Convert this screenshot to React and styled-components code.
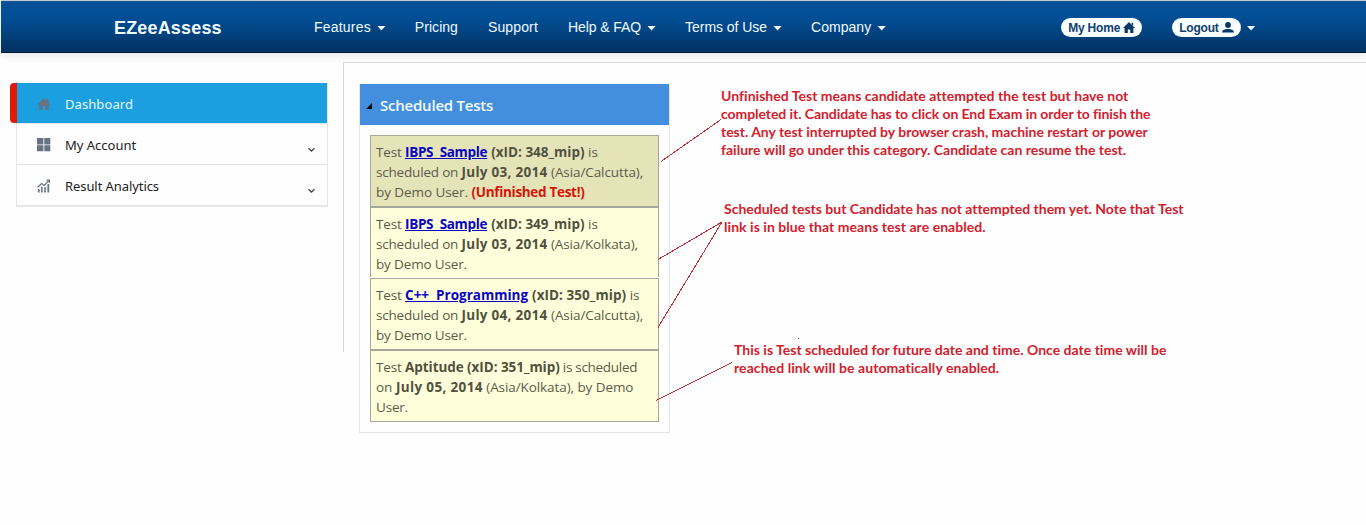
import React from 'react';
import styled, { createGlobalStyle } from 'styled-components';

const Global = createGlobalStyle`
  * { box-sizing: border-box; }
  body { margin: 0; background: #fefefe; font-family: "Open Sans", "Noto Sans", sans-serif; overflow: hidden; }
`;

const Page = styled.div`
  position: relative;
  width: 1366px;
  height: 525px;
`;

const TopBar = styled.header`
  display: flex;
  height: 53px;
  margin-left: 1px;
  padding: 0 0 0 113px;
  border-top: 1px solid #bccbd6;
  border-bottom: 1px solid #021c3d;
  background: linear-gradient(#2b5a85 0, #04509a 1px, #034f97 30%, #02417d 65%, #03315f 100%);
  background-clip: padding-box;
  box-shadow: 0 2px 9px rgba(0, 0, 0, 0.11);
  font-family: "Liberation Sans", Arial, sans-serif;
  color: #eefaff;
  line-height: 52px;
  white-space: nowrap;
`;

const Brand = styled.div`
  width: 200px;
  font-size: 18px;
  font-weight: 700;
  letter-spacing: 0.17px;
  line-height: 54px;
`;

const Nav = styled.nav`
  display: flex;
  gap: 30px;
`;

const NavItem = styled.div`
  display: flex;
  align-items: center;
  gap: 6px;
  font-size: 14px;
  letter-spacing: ${(p) => p.$ls}px;
`;

const Caret = styled.i`
  width: 9px;
  height: 5px;
  margin: 3px -1px 0 0;
  background: #f2fbff;
  clip-path: polygon(0 0, 100% 0, 50% 100%);
`;

const Account = styled.div`
  display: flex;
  align-items: center;
  margin-left: 176px;
  gap: 30px;
`;

const Pill = styled.span`
  display: flex;
  align-items: center;
  gap: 3px;
  height: 19px;
  margin-top: 2px;
  padding: 0 7px 0 7px;
  border-radius: 10px;
  background: #f8feff;
  color: #123f70;
  font-size: 12px;
  font-weight: 700;
  letter-spacing: -0.2px;
`;

const LogoutGroup = styled.div`
  display: flex;
  align-items: center;
  gap: 6px;
`;

const Body = styled.div`
  display: flex;
  align-items: flex-start;
`;

const Sidebar = styled.aside`
  width: 312px;
  margin: 30px 15px 0 16px;
  border: 1px solid #e6e6e6;
  border-top: 0;
  border-bottom: 2px solid #e6e6e6;
`;

const MenuItem = styled.div`
  position: relative;
  display: flex;
  align-items: center;
  height: ${(p) => (p.$last ? 40 : 41)}px;
  padding: 2px 11px 0 20px;
  border-bottom: ${(p) => (p.$last ? 0 : '1px solid #e6e6e6')};
  background: ${(p) => (p.$active ? '#1b9fe1' : '#fefefe')};
  color: ${(p) => (p.$active ? '#e8faff' : '#222')};
  font-size: 13px;
  svg { flex: none; }
`;

const ActiveTab = styled.span`
  position: absolute;
  left: -7px;
  top: 0;
  width: 7px;
  height: 40px;
  border-radius: 4px 0 0 4px;
  background: #dc1b0c;
`;

const MenuLabel = styled.span`
  margin-left: 14px;
  margin-right: auto;
  font-family: "Noto Sans", sans-serif;
  letter-spacing: ${(p) => p.$ls || 0}px;
`;

const Content = styled.main`
  display: flex;
  align-items: flex-start;
  flex: 1;
  height: 290px;
  margin-top: 9px;
  padding: 21px 0 0 15px;
  border-top: 1px solid #dcd6d8;
  border-left: 1px solid #d9d6d8;
`;

const Panel = styled.section`
  flex: none;
  width: 311px;
  border: 1px solid #e6e6ea;
  border-top: 0;
  padding-bottom: 10px;
`;

const PanelHeader = styled.h2`
  display: flex;
  align-items: center;
  height: 41px;
  margin: 0 0 10px;
  padding: 0 0 0 6px;
  background: #438fdd;
  color: #f2fbff;
  font-size: 15px;
  font-weight: 600;
  svg { margin: 3px 8px 0 0; }
`;

const TestList = styled.div`
  width: 289px;
  margin-left: 10px;
`;

const TestRow = styled.div`
  height: ${(p) => p.$h}px;
  padding: 6px 0 0 5px;
  border: 1px solid #a5a898;
  border-bottom-width: ${(p) => (p.$open ? 0 : 1)}px;
  margin-bottom: ${(p) => (p.$open ? 1 : 0)}px;
  background: ${(p) => (p.$unfinished ? '#e5e4b9' : '#feffda')};
  color: #5b5b4c;
  font-size: 13.5px;
`;

const Line = styled.div`
  height: 20px;
  line-height: 20px;
  white-space: pre;
`;

const Run = styled.span`
  letter-spacing: ${(p) => p.$ls || 0}px;
`;

const Strong = styled(Run)`
  font-weight: 700;
  color: ${(p) => (p.$alert ? '#d61408' : '#51513f')};
`;

const TestLink = styled(Run)`
  font-weight: 700;
  color: #0a04c4;
  text-decoration: underline;
`;

const Notes = styled.div`
  display: flex;
  flex-direction: column;
  margin-left: 51px;
  padding-top: 3px;
`;

const Note = styled.p`
  margin: 0 0 ${(p) => p.$after}px ${(p) => p.$indent}px;
  color: #d3202c;
  font-family: Lato, sans-serif;
  font-size: 14px;
  font-weight: 700;
`;

const NoteLine = styled.span`
  display: block;
  width: max-content;
  height: 18px;
  line-height: 18px;
  white-space: nowrap;
  letter-spacing: ${(p) => p.$ls || 0}px;
`;

const Connectors = styled.svg`
  position: absolute;
  left: 0;
  top: 0;
  pointer-events: none;
`;

const Home = ({ w, h, color }) => (
  <svg width={w} height={h} viewBox="0 0 12 11" fill={color}>
    <path d="M6 0L12 6H10.4V11H7.2V7.4H4.8V11H1.6V6H0L6 0ZM8.6.8h1.6v3L8.6 2.2Z" />
  </svg>
);
const User = () => (
  <svg width="12" height="11" viewBox="0 0 12 11" fill="#0b3768">
    <ellipse cx="6" cy="3" rx="2.9" ry="3" />
    <path d="M0 10.5C0 8 2 7.4 4.4 6.9h3.2C10 7.4 12 8 12 10.5Z" />
  </svg>
);
const Grid = () => (
  <svg width="14" height="14" viewBox="0 0 14 14" fill="#667383">
    <path d="M0 0h6.4v6.4H0zM7.3 0h6v6.4h-6zM0 7.3h6.4v6H0zM7.3 7.3h6v6h-6z" />
  </svg>
);
const Chart = () => (
  <svg width="14" height="14" viewBox="0 0 14 14" fill="#667383">
    <path d="M1 10h1.6v3.5H1zM4 7.8h1.6v5.7H4zM7.2 8.3h1.6v5.2H7.2zM10.4 5h1.8v8.5h-1.8z" />
    <path d="M.6 8.2L4.6 4.6 7.2 6.4 11.6 1.8M9.4 1.2h3v2.8" fill="none" stroke="#667383" strokeWidth="1.2" />
  </svg>
);
const ChevronIcon = styled.svg`
  margin-top: 9px;
`;
const Chevron = () => (
  <ChevronIcon width="9" height="6" viewBox="0 0 9 6" fill="none" stroke="#444" strokeWidth="1.3">
    <path d="M1.5 1.2L4.5 4 7.5 1.2" />
  </ChevronIcon>
);

const navItems = [
  ['Features', true, 0.2], ['Pricing', false, 0.04], ['Support', false, 0.14],
  ['Help & FAQ', true, -0.08], ['Terms of Use', true, -0.04], ['Company', true, 0.03],
];

const tests = [
  { h: 72, unfinished: true, lines: [
    [['t', 'Test ', -0.15], ['a', 'IBPS  Sample', -0.31], ['t', ' ', 0.4], ['b', '(xID: 348_mip)'], ['t', ' is']],
    [['t', 'scheduled on ', -0.19], ['b', 'July 03, 2014', 0.29], ['t', ' (Asia/Calcutta),', -0.09]],
    [['t', 'by Demo User. ', -0.07], ['r', '(Unfinished Test!)', -0.3]],
  ] },
  { h: 70, open: true, lines: [
    [['t', 'Test ', -0.15], ['a', 'IBPS  Sample', -0.31], ['t', ' ', 0.4], ['b', '(xID: 349_mip)'], ['t', ' is']],
    [['t', 'scheduled on ', -0.19], ['b', 'July 03, 2014', 0.29], ['t', ' (Asia/Kolkata),', -0.14]],
    [['t', 'by Demo User.', -0.15]],
  ] },
  { h: 72, lines: [
    [['t', 'Test ', -0.15], ['a', 'C++  Programming'], ['t', ' ', 0.4], ['b', '(xID: 350_mip)', 0.05], ['t', ' is']],
    [['t', 'scheduled on ', -0.19], ['b', 'July 04, 2014', 0.29], ['t', ' (Asia/Calcutta),', -0.09]],
    [['t', 'by Demo User.', -0.15]],
  ] },
  { h: 72, lines: [
    [['t', 'Test ', -0.15], ['b', 'Aptitude (xID: 351_mip)', -0.06], ['t', ' is scheduled', -0.3]],
    [['t', 'on '], ['b', 'July 05, 2014', 0.35], ['t', ' (Asia/Kolkata), by Demo', -0.08]],
    [['t', 'User.', -0.2]],
  ] },
];

const notes = [
  { indent: 0, after: 41, lines: [
    ['Unfinished Test means candidate attempted the test but have not', 0.03],
    ['completed it. Candidate has to click on End Exam in order to finish the', -0.07],
    ['test. Any test interrupted by browser crash, machine restart or power', -0.02],
    ['failure will go under this category. Candidate can resume the test.', 0],
  ] },
  { indent: 3, after: 105, lines: [
    ['Scheduled tests but Candidate has not attempted them yet. Note that Test', -0.01],
    ['link is in blue that means test are enabled.', 0.05],
  ] },
  { indent: 13, after: 0, lines: [
    ['This is Test scheduled for future date and time. Once date time will be', 0.01],
    ['reached link will be automatically enabled.', 0.07],
  ] },
];

const kinds = { t: Run, b: Strong, a: TestLink, r: Strong };

export default function App() {
  return (
    <Page>
      <Global />
      <TopBar>
        <Brand>EZeeAssess</Brand>
        <Nav>
          {navItems.map(([label, menu, ls]) => (
            <NavItem key={label} $ls={ls}>{label}{menu && <Caret />}</NavItem>
          ))}
        </Nav>
        <Account>
          <Pill>My Home<Home w={12} h={11} color="#0b3768" /></Pill>
          <LogoutGroup><Pill>Logout<User /></Pill><Caret /></LogoutGroup>
        </Account>
      </TopBar>
      <Body>
        <Sidebar>
          <MenuItem $active><ActiveTab /><Home w={14} h={12} color="#667383" /><MenuLabel $ls={0.08}>Dashboard</MenuLabel></MenuItem>
          <MenuItem><Grid /><MenuLabel>My Account</MenuLabel><Chevron /></MenuItem>
          <MenuItem $last><Chart /><MenuLabel $ls={-0.08}>Result Analytics</MenuLabel><Chevron /></MenuItem>
        </Sidebar>
        <Content>
          <Panel>
            <PanelHeader>
              <svg width="6" height="6"><path d="M6 0V6H0Z" fill="#03060f" /></svg>
              <Run $ls={-0.22}>Scheduled Tests</Run>
            </PanelHeader>
            <TestList>
              {tests.map((t, i) => (
                <TestRow key={i} $h={t.h} $unfinished={t.unfinished} $open={t.open}>
                  {t.lines.map((line, j) => (
                    <Line key={j}>
                      {line.map(([k, text, ls], n) => {
                        const Part = kinds[k];
                        return <Part key={n} $ls={ls} $alert={k === 'r'}>{text}</Part>;
                      })}
                    </Line>
                  ))}
                </TestRow>
              ))}
            </TestList>
          </Panel>
          <Notes>
            {notes.map((n, i) => (
              <Note key={i} $indent={n.indent} $after={n.after}>
                {n.lines.map(([text, ls]) => <NoteLine key={text} $ls={ls}>{text}</NoteLine>)}
              </Note>
            ))}
          </Notes>
        </Content>
      </Body>
      <Connectors width="1366" height="525" fill="none" stroke="#bf2a33" shapeRendering="crispEdges">
        <path d="M661 161.500L721 119.500M658 259.500L722 222M658 327.500L722 222M656 400.500L732 362.500" />
        <path d="M798 338.500h1" stroke="#555" />
      </Connectors>
    </Page>
  );
}
